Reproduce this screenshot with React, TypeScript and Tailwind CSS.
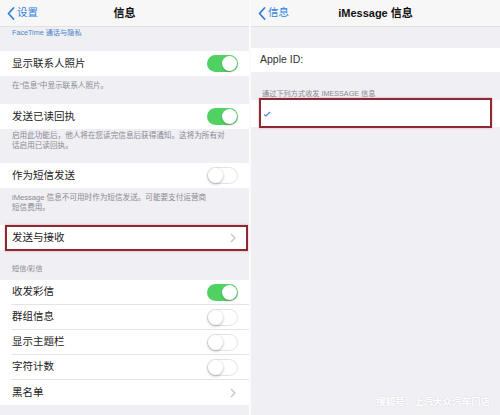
import React from "react";

const FONT = "font-['Liberation_Sans','Noto_Sans_CJK_SC',sans-serif]";

function Toggle({ on }: { on: boolean }) {
  return on ? (
    <div className="relative h-[17px] w-[31px] rounded-full bg-[#4fd263]">
      <div className="absolute right-[1px] top-[1px] h-[15px] w-[15px] rounded-full bg-white shadow-[0_1px_2px_rgba(0,0,0,0.25)]" />
    </div>
  ) : (
    <div className="relative h-[17px] w-[31px] rounded-full border border-[#e3e3e6] bg-white">
      <div className="absolute left-0 top-0 h-[15px] w-[15px] rounded-full bg-white shadow-[0_1px_3px_rgba(0,0,0,0.3)]" />
    </div>
  );
}

function Chevron() {
  return (
    <svg width="6" height="10" viewBox="0 0 6 10" className="mr-[2px]">
      <path d="M1 1 L5 5 L1 9" stroke="#c4c4c9" strokeWidth="1.3" fill="none" />
    </svg>
  );
}

function BackArrow() {
  return (
    <svg width="8" height="13" viewBox="0 0 8 13">
      <path d="M6.5 1 L1.5 6.5 L6.5 12" stroke="#2f7fe0" strokeWidth="1.8" fill="none" strokeLinecap="round" strokeLinejoin="round" />
    </svg>
  );
}

function Row({ label, right, last }: { label: string; right?: React.ReactNode; last?: boolean }) {
  return (
    <div className="flex h-[25px] items-center bg-white pl-[12px]">
      <div className={`flex h-full flex-1 items-center justify-between pr-[11px] ${last ? "" : "border-b border-[#e4e4e8]"}`}>
        <span className="text-[10.5px] text-[#1c1c1c]">{label}</span>
        {right}
      </div>
    </div>
  );
}

function Footer({ children, className = "" }: { children: React.ReactNode; className?: string }) {
  return <div className={`px-[12px] text-[7.6px] leading-[10px] text-[#8a8a8f] ${className}`}>{children}</div>;
}

function NavBar({ back, title }: { back: string; title: string }) {
  return (
    <div className="flex h-[27px] items-center border-b border-[#e2e2e6] bg-[#f7f7f8] px-[7px]">
      <div className="flex w-[60px] items-center gap-[2px]">
        <BackArrow />
        <span className="text-[10.5px] text-[#2f7fe0]">{back}</span>
      </div>
      <div className="flex-1 text-center text-[11px] font-bold text-[#111]">{title}</div>
      <div className="w-[60px]" />
    </div>
  );
}

export default function App() {
  return (
    <div className={`flex h-[415px] w-[500px] overflow-hidden bg-white ${FONT}`}>
      {/* Left panel */}
      <div className="relative flex w-[249px] flex-col bg-[#efeff4]">
        <NavBar back="设置" title="信息" />
        <div className="h-[24px] px-[12px] pt-[1px] text-[7.2px] leading-[9px] text-[#4a86c8]">FaceTime 通话与隐私</div>
        <Row label="显示联系人照片" right={<Toggle on />} last />
        <Footer className="pt-[5px] h-[28px]">在“信息”中显示联系人照片。</Footer>
        <Row label="发送已读回执" right={<Toggle on />} last />
        <Footer className="pt-[2px] h-[34px]">
          启用此功能后，他人将在您读完信息后获得通知。这将为所有对
          <br />
          话启用已读回执。
        </Footer>
        <Row label="作为短信发送" right={<Toggle on={false} />} last />
        <Footer className="pt-[5px] h-[37px] pr-[30px]">
          iMessage 信息不可用时作为短信发送。可能要支付运营商
          <br />
          短信费用。
        </Footer>
        <div className="relative">
          <Row label="发送与接收" right={<Chevron />} last />
          <div className="pointer-events-none absolute bottom-[-1px] left-[5px] right-[1px] top-0 border-2 border-[#8b2a35] shadow-[0_0_2px_rgba(220,80,90,0.5)]" />
        </div>
        <div className="flex h-[30px] items-end px-[12px] pb-[5px] text-[7.2px] text-[#8a8a8f]">短信/彩信</div>
        <Row label="收发彩信" right={<Toggle on />} />
        <Row label="群组信息" right={<Toggle on={false} />} />
        <Row label="显示主题栏" right={<Toggle on={false} />} />
        <Row label="字符计数" right={<Toggle on={false} />} />
        <Row label="黑名单" right={<Chevron />} last />
      </div>

      {/* Divider */}
      <div className="w-[2px] bg-[#fbfbfc]" />

      {/* Right panel */}
      <div className="relative flex w-[249px] flex-col bg-[#efeff4]">
        <NavBar back="信息" title="iMessage 信息" />
        <div className="h-[21px]" />
        <div className="flex h-[24px] items-center bg-white pl-[9px] text-[10.5px] text-[#333]">Apple ID:</div>
        <div className="flex h-[28px] items-end px-[11px] pb-0 text-[7.2px] text-[#8a8a8f]">通过下列方式收发 IMESSAGE 信息</div>
        <div className="relative flex h-[27px] items-center bg-white pl-[12px]">
          <svg width="8" height="6" viewBox="0 0 8 6">
            <path d="M1 3.5 L3 5 L7 1" stroke="#4a86c8" strokeWidth="1.1" fill="none" />
          </svg>
          <div className="pointer-events-none absolute bottom-[-1px] left-[8px] right-[8px] top-[-2px] border-2 border-[#8b2a35] shadow-[0_0_2px_rgba(220,80,90,0.5)]" />
        </div>
        <div className="absolute bottom-[6px] right-[10px] text-[9.5px] font-bold text-white [text-shadow:0_0_2px_rgba(0,0,0,0.12)]">
          搜狐号：上汽大众汽车门店
        </div>
      </div>
    </div>
  );
}
